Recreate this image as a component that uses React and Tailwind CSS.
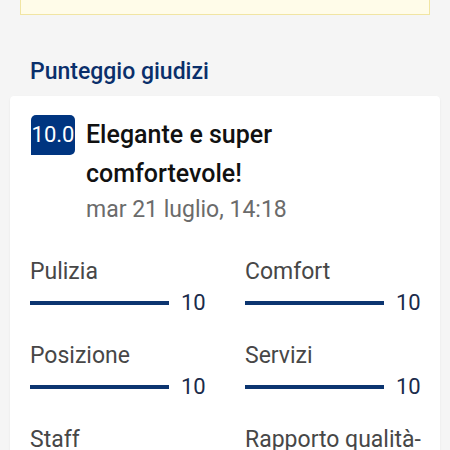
const scores = [
  { label: 'Pulizia', value: 10 },
  { label: 'Comfort', value: 10 },
  { label: 'Posizione', value: 10 },
  { label: 'Servizi', value: 10 },
  { label: 'Staff', value: 10 },
  { label: 'Rapporto qualità-prezzo', value: 10 },
]

function ScoreItem({ label, value }) {
  return (
    <div>
      <div className="mr-[-12px] text-[23px] leading-[28px] text-[#474747]">{label}</div>
      <div className="mt-[3px] flex items-center gap-[12px]">
        <div className="h-[4px] flex-1 bg-[#e6e6e6]">
          <div className="h-full bg-[#0c3570]" style={{ width: `${value * 10}%` }} />
        </div>
        <span className="w-[24px] text-[22px] leading-[28px] text-[#1a2b4b]">{value}</span>
      </div>
    </div>
  )
}

export default function App() {
  return (
    <div className="min-h-[450px] bg-[#f5f5f5] pb-6" style={{ fontFamily: 'Roboto, "Noto Sans", sans-serif' }}>
      {/* notice box, cut off at the top */}
      <div className="mx-[20px] h-[15px] border-x border-b border-[#f1e5a3] bg-[#fffce9]" />

      <h2 className="mt-[43px] px-[30px] text-[23px] font-medium leading-[28px] text-[#0a2f6b]">
        Punteggio giudizi
      </h2>

      <div className="mx-[10px] mt-[10px] rounded-[4px] bg-white px-[20px] pb-6 pt-[19px] shadow-[0_1px_2px_rgba(0,0,0,0.08)]">
        <div className="flex items-start gap-[11px]">
          <div className="ml-px flex h-[40px] w-[44px] shrink-0 items-center justify-center rounded-[5px] rounded-bl-none bg-[#003580] text-[22px] leading-none text-white">
            10.0
          </div>
          <div>
            <div className="text-[25px] font-medium leading-[39px] text-[#111111]">
              Elegante e super comfortevole!
            </div>
            <div className="mt-[3px] text-[23px] leading-[28px] text-[#6b6b6b]">mar 21 luglio, 14:18</div>
          </div>
        </div>

        <div className="mt-[34px] grid grid-cols-2 gap-x-[40px] gap-y-[25px]">
          {scores.map((s) => (
            <ScoreItem key={s.label} label={s.label} value={s.value} />
          ))}
        </div>
      </div>
    </div>
  )
}
